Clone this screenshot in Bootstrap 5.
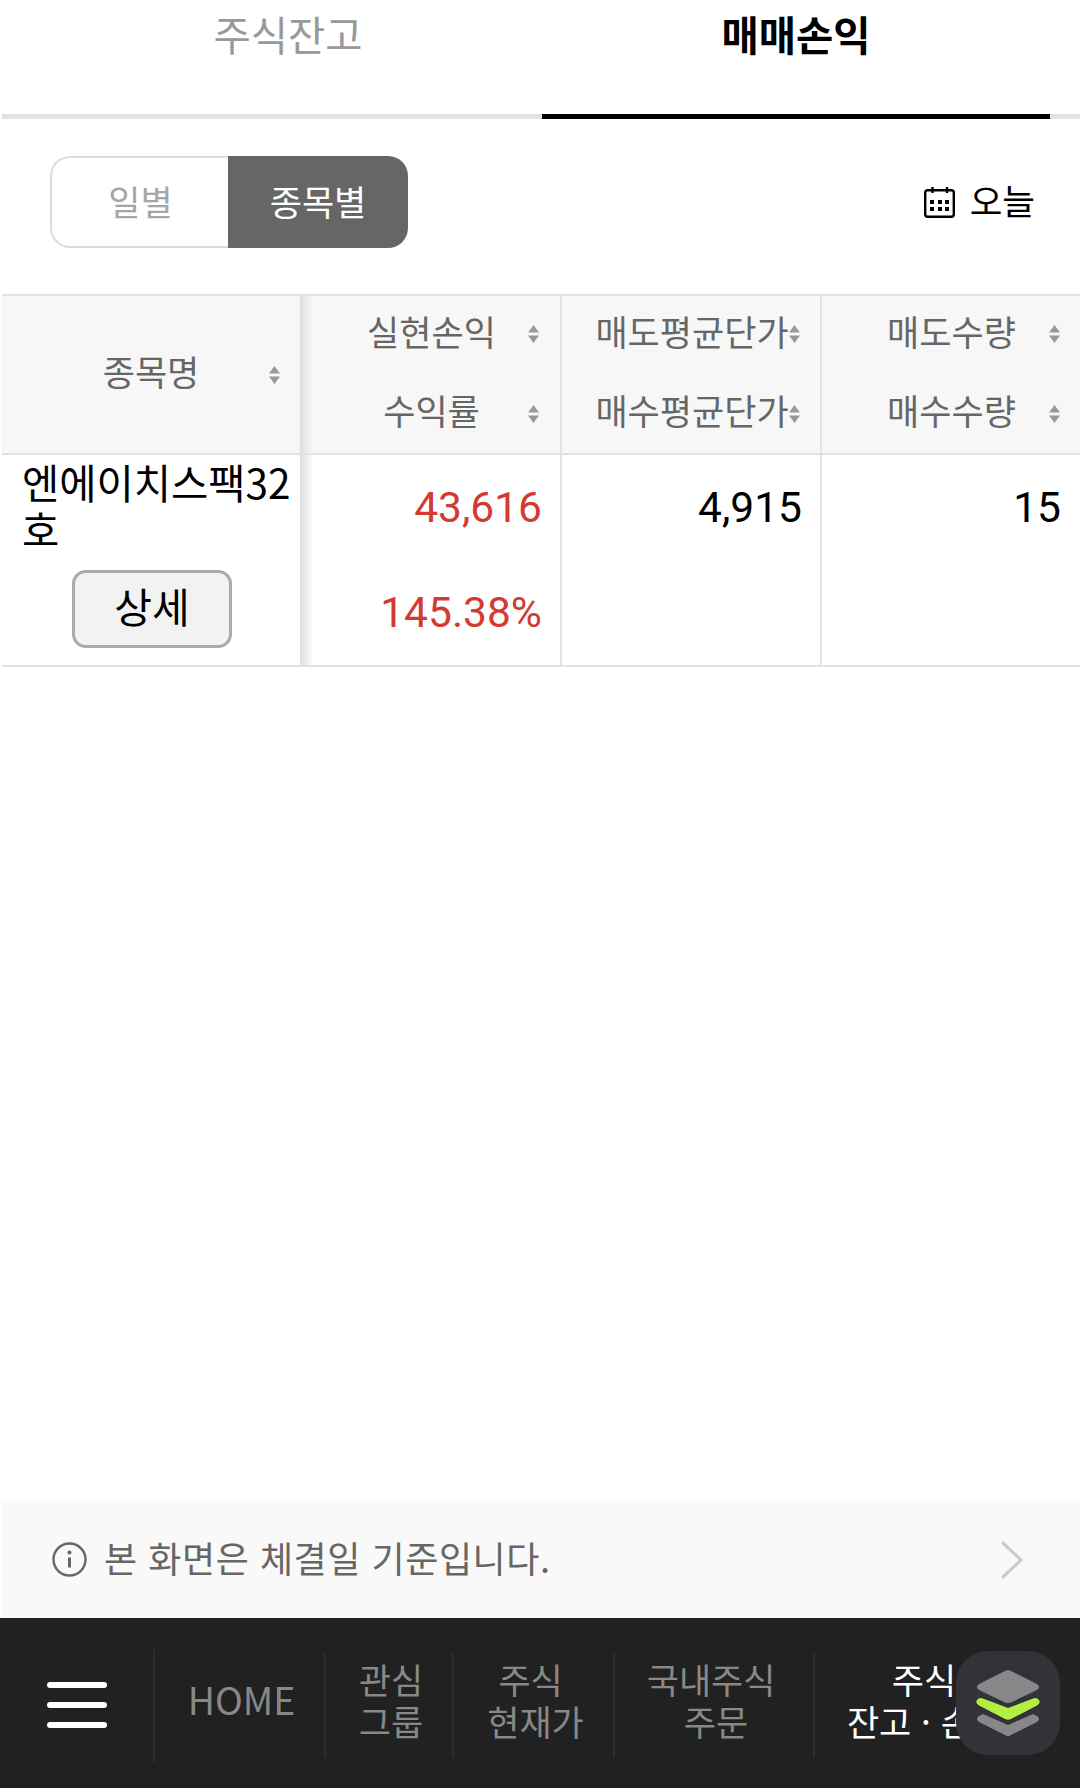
<!doctype html>
<html lang="ko">
<head>
<meta charset="utf-8">
<title>매매손익</title>
<link href="https://cdn.jsdelivr.net/npm/bootstrap@5.3.0/dist/css/bootstrap.min.css" rel="stylesheet">
<style>
html,body{margin:0;background:#fff}
body{width:1080px;height:1788px;overflow:hidden;font-family:"Noto Sans CJK KR","Liberation Sans",sans-serif;letter-spacing:0}
.page{height:1788px}
.tabbar{margin-left:2px;padding-left:32px;border-bottom:5px solid #e2e2e2;height:119px}
.tabitem{width:508px;height:119px;border-bottom:5px solid transparent;font-size:40.5px;line-height:68px;color:#999;text-align:center}
.tabitem.on{color:#000;font-weight:700;border-bottom-color:#000}
.toolbar{height:175px;padding:37px 45px 0 50px}
.seg .btn{height:92px;font-size:35px;line-height:1;padding:0 0 4px;border-radius:20px}
.seg .off{width:179px;background:#fff;border:2px solid #ddd;border-right:0;color:#a5a5a5}
.seg .act{width:180px;background:#666;border:0;color:#fff}
.today{font-size:35.5px;height:88px;color:#000;gap:15px}
.today svg{margin-top:4px}
.tbl{margin:0 0 0 2px;width:1078px;table-layout:fixed;border-collapse:collapse;--bs-table-bg:transparent;--bs-table-border-color:#e2e2e2}
.tbl>*>tr>*{padding:0;border:0;border-top:2px solid #e2e2e2;border-bottom:2px solid #e2e2e2;vertical-align:top;position:relative}
.tbl th{background:#f7f7f7;color:#666;font-weight:400;font-size:35px;height:157px}
.tbl .c2{background-image:linear-gradient(to right,#dcdcdc,#e4e4e4 3px,rgba(228,228,228,0) 13px);background-size:13px 100%;background-repeat:no-repeat}
.tbl th.c2{background-color:#f7f7f7}
.tbl .c3,.tbl .c4{border-left:2px solid #e2e2e2}
.hcell{height:78.5px;display:flex;align-items:center;justify-content:center;position:relative;white-space:nowrap;padding-bottom:9px}
.hcell+.hcell{padding-bottom:8px}
.c2 .hcell{padding-left:3px}
.c3 .hcell{padding-left:2px}
.c4 .hcell{padding-left:1px}
.hcell.tall{height:157px;padding-bottom:7px}
.sorter{position:absolute;right:20px;top:29px;width:11px;height:18px}
.c2 .sorter{right:21px}
.hcell+.hcell .sorter{top:30px}
.hcell.tall .sorter{top:70px}
.namecell{padding:3px 4px 0 20px;font-size:40.5px;line-height:47px;height:115px;color:#000;word-break:break-all}
.detail{display:block;margin:0 0 0 70px;width:160px;height:78px;padding:0 0 8px;background:#f2f2f2;border:3px solid #aaa;border-radius:14px;font-size:41px;line-height:1;color:#000;--bs-btn-hover-bg:#f2f2f2}
.num{height:105px;display:flex;align-items:center;justify-content:flex-end;padding-right:18px;font-family:Roboto,"Liberation Sans",sans-serif;font-size:42.5px;color:#000}
.c4 .num{padding-right:19px}
.up{color:#d33a32}
.infobar{margin-left:2px;height:117px;background:#f9f9f9;padding:0 57px 0 50px;color:#666;font-size:36px;gap:17px}
.infotext{letter-spacing:.55px;white-space:nowrap;padding-bottom:5px}
.botnav{height:170px;background:#212121;position:relative;overflow:hidden}
.burger{width:155px;height:113px;margin-top:31px;border-right:2px solid #2d2d2d;padding:33px 0 0 47px;flex:none}
.burger span{display:block;width:60px;height:6px;border-radius:3px;background:#fff;margin-bottom:14px}
.navcell{height:105px;margin-top:35px;border-left:2px solid #2d2d2d;color:#888;font-size:35px;line-height:42px;text-align:center;white-space:nowrap;flex:none;padding-bottom:12px}
.navcell.on{color:#fff}
.navcell.nudge{padding-left:4px}
.navhome{font-size:37.5px;border-left:0;padding-left:4px;padding-bottom:13px}
.pad-r{padding-right:4px}
.fab{position:absolute;left:956px;top:33px;width:104px;height:104px;border-radius:32px;background:#323338}
</style>
</head>
<body>
<div class="page d-flex flex-column">
  <div class="tabbar d-flex">
    <div class="tabitem">주식잔고</div>
    <div class="tabitem on">매매손익</div>
  </div>

  <div class="toolbar d-flex justify-content-between align-items-start">
    <div class="btn-group seg" role="group">
      <button type="button" class="btn off">일별</button>
      <button type="button" class="btn act">종목별</button>
    </div>
    <div class="today d-flex align-items-center">
      <svg width="31" height="32" viewBox="0 0 31 32" fill="none" aria-hidden="true"><rect x="1.2" y="4.2" width="28.6" height="26.6" rx="2.5" stroke="#000" stroke-width="2.4"/><path d="M8.500 1v6M23 1v6" stroke="#000" stroke-width="2.4"/><g fill="#000"><rect x="6" y="14" width="4" height="4"/><rect x="14" y="14" width="4" height="4"/><rect x="21" y="14" width="4" height="4"/><rect x="6" y="21" width="4" height="4"/><rect x="14" y="21" width="4" height="4"/><rect x="21" y="21" width="4" height="4"/></g></svg>
      <span>오늘</span>
    </div>
  </div>

  <table class="table tbl">
    <colgroup><col style="width:298px"><col style="width:261px"><col style="width:260px"><col style="width:259px"></colgroup>
    <thead>
      <tr>
        <th><div class="hcell tall">종목명<svg class="sorter" viewBox="0 0 11 18"><path d="M5.500 0 11 7.500H0zM0 10.500h11L5.500 18z" fill="#999"/></svg></div></th>
        <th class="c2">
          <div class="hcell">실현손익<svg class="sorter" viewBox="0 0 11 18"><path d="M5.500 0 11 7.500H0zM0 10.500h11L5.500 18z" fill="#999"/></svg></div>
          <div class="hcell">수익률<svg class="sorter" viewBox="0 0 11 18"><path d="M5.500 0 11 7.500H0zM0 10.500h11L5.500 18z" fill="#999"/></svg></div>
        </th>
        <th class="c3">
          <div class="hcell">매도평균단가<svg class="sorter" viewBox="0 0 11 18"><path d="M5.500 0 11 7.500H0zM0 10.500h11L5.500 18z" fill="#999"/></svg></div>
          <div class="hcell">매수평균단가<svg class="sorter" viewBox="0 0 11 18"><path d="M5.500 0 11 7.500H0zM0 10.500h11L5.500 18z" fill="#999"/></svg></div>
        </th>
        <th class="c4">
          <div class="hcell">매도수량<svg class="sorter" viewBox="0 0 11 18"><path d="M5.500 0 11 7.500H0zM0 10.500h11L5.500 18z" fill="#999"/></svg></div>
          <div class="hcell">매수수량<svg class="sorter" viewBox="0 0 11 18"><path d="M5.500 0 11 7.500H0zM0 10.500h11L5.500 18z" fill="#999"/></svg></div>
        </th>
      </tr>
    </thead>
    <tbody>
      <tr>
        <td>
          <div class="namecell">엔에이치스팩32호</div>
          <button type="button" class="btn detail">상세</button>
        </td>
        <td class="c2">
          <div class="num up">43,616</div>
          <div class="num up">145.38%</div>
        </td>
        <td class="c3"><div class="num">4,915</div></td>
        <td class="c4"><div class="num">15</div></td>
      </tr>
    </tbody>
  </table>

  <div class="flex-grow-1"></div>

  <div class="infobar d-flex align-items-center">
    <svg width="35" height="35" viewBox="0 0 35 35" fill="none" aria-hidden="true"><circle cx="17.5" cy="17.5" r="16" stroke="#666" stroke-width="2.4"/><circle cx="17.5" cy="10.5" r="2" fill="#666"/><path d="M17.5 15.5v10" stroke="#666" stroke-width="3"/></svg>
    <span class="infotext">본 화면은 체결일 기준입니다.</span>
    <svg class="ms-auto" width="22" height="38" viewBox="0 0 22 38" fill="none" aria-hidden="true"><path d="M2 2l18 17L2 36" stroke="#ccc" stroke-width="3.2" stroke-linecap="round" stroke-linejoin="round"/></svg>
  </div>

  <div class="botnav d-flex">
    <div class="burger"><span></span><span></span><span></span></div>
    <div class="navcell navhome d-flex align-items-center justify-content-center" style="width:169px">HOME</div>
    <div class="navcell nudge d-flex align-items-center justify-content-center" style="width:128px"><div>관심<br>그룹</div></div>
    <div class="navcell nudge d-flex align-items-center justify-content-center" style="width:161px"><div>주식&nbsp;<br>현재가</div></div>
    <div class="navcell nudge d-flex align-items-center justify-content-center" style="width:200px"><div>국내주식&nbsp;<br>주문</div></div>
    <div class="navcell nudge on d-flex align-items-center justify-content-center" style="width:220px"><div><span class="pad-r">주식</span><br>잔고 · 손익</div></div>
    <div class="fab">
      <svg width="104" height="104" viewBox="0 0 104 104" aria-hidden="true">
        <path d="M27 63 52 74 77 63 81 65Q85 68 81 71L54 84.500Q52 85.500 50 84.500L23 71Q19 68 23 65Z" fill="#87878a"/>
        <path d="M52 19Q53 19 55 20L81 33Q85 36 81 39L55 51.500Q52 52.500 49 51.500L23 39Q19 36 23 33L49 20Q51 19 52 19Z" fill="#87878a"/>
        <path d="M21 49Q23 46 27 47.500L52 57 77 47.500Q81 46 83 49 85 52 81 54.500L55 68Q52 69.500 49 68L23 54.500Q19 52 21 49Z" fill="#b2ee44"/>
      </svg>
    </div>
  </div>
</div>
<script src="https://cdn.jsdelivr.net/npm/bootstrap@5.3.0/dist/js/bootstrap.bundle.min.js"></script>
</body>
</html>
